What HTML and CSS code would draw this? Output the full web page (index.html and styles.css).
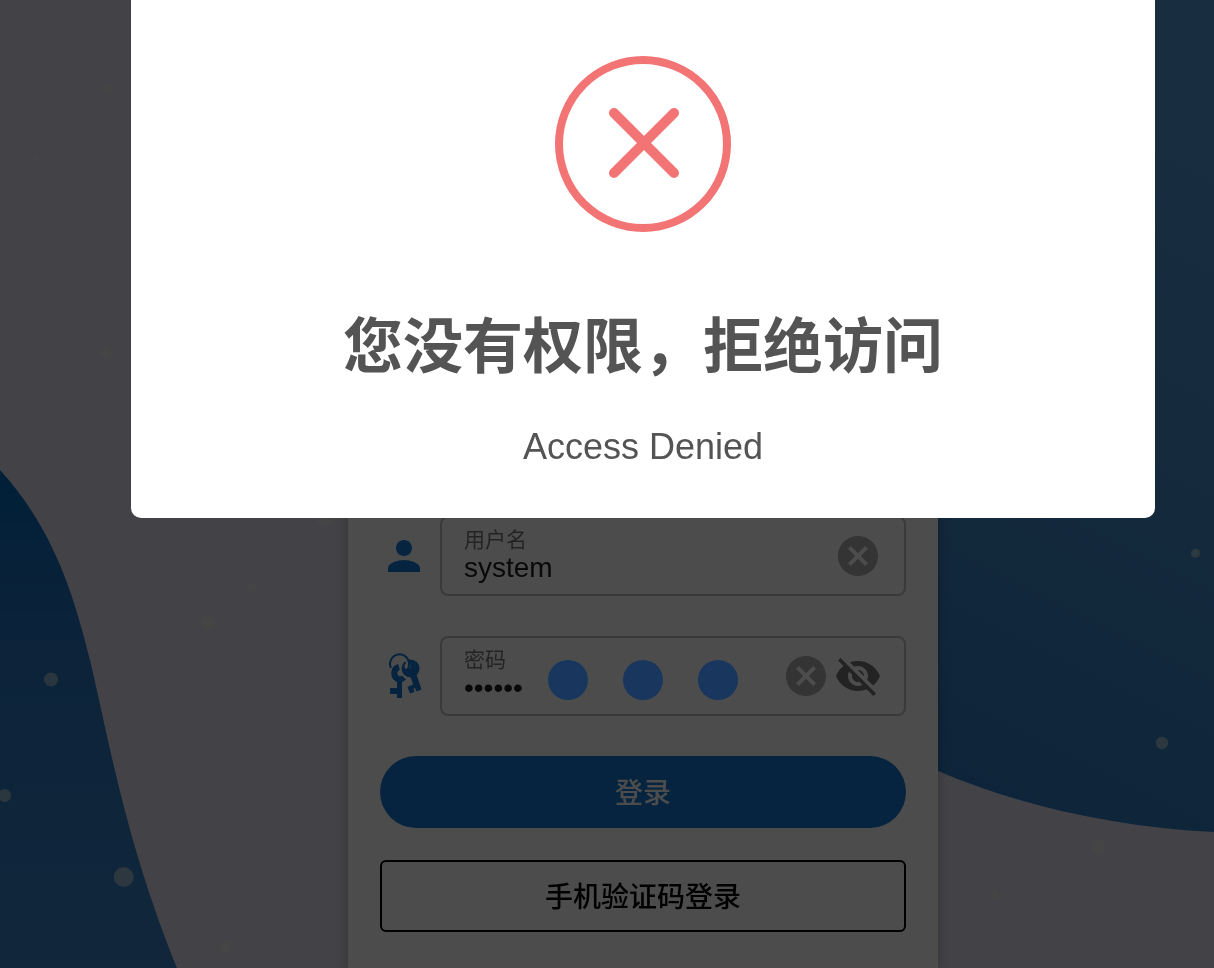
FILE: index.html
```html
<!DOCTYPE html>
<html lang="zh-CN">
<head>
<meta charset="utf-8">
<meta name="viewport" content="width=device-width, initial-scale=1">
<title>登录</title>
<link rel="stylesheet" href="styles.css">
</head>
<body>
<svg class="scene" viewBox="0 0 1214 968" preserveAspectRatio="xMidYMid slice" aria-hidden="true">
  <defs>
    <linearGradient id="waveLeft" gradientUnits="userSpaceOnUse" x1="0" y1="470" x2="0" y2="968">
      <stop offset="0" stop-color="#0669bd"/>
      <stop offset=".35" stop-color="#2876c2"/>
      <stop offset="1" stop-color="#3b82c6"/>
    </linearGradient>
    <linearGradient id="waveRight" gradientUnits="userSpaceOnUse" x1="850" y1="900" x2="1250" y2="100">
      <stop offset="0" stop-color="#2473c0"/>
      <stop offset=".5" stop-color="#4289c8"/>
      <stop offset="1" stop-color="#5598da"/>
    </linearGradient>
  </defs>
  <path fill="url(#waveLeft)" d="M0 470C55 530 75 600 90 660C110 745 126 842 177 968H0Z"/>
  <path fill="url(#waveRight)" d="M760 0V660C820 715 870 744 938 771C1020 806 1115 827 1214 832V0Z"/>
  <g class="bubbles">
    <circle cx="108" cy="89" r="4"/><circle cx="36" cy="158" r="2"/><circle cx="106" cy="353" r="5"/>
    <circle cx="325" cy="517" r="9"/><circle cx="252" cy="587" r="4.500"/><circle cx="208" cy="623.500" r="7"/>
    <circle cx="51" cy="679.500" r="7"/><circle cx="4.700" cy="795.500" r="6.500"/><circle cx="123.700" cy="877" r="10"/>
    <circle cx="200" cy="923.500" r="2"/><circle cx="226" cy="947" r="5.500"/><circle cx="1195.500" cy="553.300" r="4.500"/>
    <circle cx="1162" cy="743" r="6.200"/><circle cx="1097.700" cy="846.500" r="7"/><circle cx="994.500" cy="894.500" r="4"/>
  </g>
</svg>

<main class="page">
  <form class="card">
    <div class="row">
      <svg class="icon primary" viewBox="0 0 24 24" aria-hidden="true"><path d="M12 12c2.210 0 4-1.790 4-4s-1.790-4-4-4-4 1.790-4 4 1.790 4 4 4zm0 2c-2.670 0-8 1.340-8 4v2h16v-2c0-2.660-5.330-4-8-4z"/></svg>
      <div class="field">
        <div class="entry">
          <label for="user">用户名</label>
          <input id="user" type="text" value="system">
        </div>
        <button class="tool clear" type="button" aria-label="清除用户名"><svg class="icon" viewBox="0 0 24 24"><path d="M12 2C6.470 2 2 6.470 2 12s4.470 10 10 10 10-4.470 10-10S17.530 2 12 2zm5 13.590L15.590 17 12 13.410 8.410 17 7 15.590 10.590 12 7 8.410 8.410 7 12 10.590 15.590 7 17 8.410 13.410 12 17 15.590z"/></svg></button>
      </div>
    </div>
    <div class="row">
      <svg class="icon primary" viewBox="0 0 48 48" aria-hidden="true">
        <path class="head" d="M19 15A6.500 6.500 0 0 0 19 27.500Q22 27.500 24 25.500"/>
        <path d="M17 26H22V46H17V42H10V36H17Z"/>
        <path d="M31 24L36 21L41.500 37.500L36.500 39.500L35 36L33.500 36.500L34.500 40L30 41.500L27.500 35L33 32.500Z"/>
        <circle class="gap" cx="30.500" cy="16.500" r="10"/>
        <path d="M30 23L36 21L38 28L32.500 30Z"/>
        <circle cx="30.500" cy="16.500" r="9"/>
        <circle class="gap" cx="27.500" cy="14" r="3"/>
        <path class="slit" d="M24.500 7Q30 12 26.500 17"/>
        <path class="ring" d="M11 16A9.500 9.500 0 1 1 29 13Q29 17 26 18.500"/>
      </svg>
      <div class="field">
        <div class="entry">
          <label for="pass">密码</label>
          <input id="pass" type="password" value="system">
        </div>
        <button class="tool clear" type="button" aria-label="清除密码"><svg class="icon" viewBox="0 0 24 24"><path d="M12 2C6.470 2 2 6.470 2 12s4.470 10 10 10 10-4.470 10-10S17.530 2 12 2zm5 13.590L15.590 17 12 13.410 8.410 17 7 15.590 10.590 12 7 8.410 8.410 7 12 10.590 15.590 7 17 8.410 13.410 12 17 15.590z"/></svg></button>
        <button class="tool" type="button" aria-label="显示密码"><svg class="icon" viewBox="0 0 24 24"><path d="M12 7c2.760 0 5 2.240 5 5 0 .65-.13 1.260-.36 1.830l2.920 2.920c1.510-1.260 2.700-2.890 3.430-4.750-1.730-4.390-6-7.500-11-7.500-1.400 0-2.740.25-3.980.7l2.160 2.160C10.740 7.130 11.350 7 12 7zM2 4.270l2.280 2.280.46.46C3.080 8.300 1.780 10.020 1 12c1.730 4.390 6 7.500 11 7.500 1.550 0 3.030-.3 4.380-.84l.42.42L19.730 22 21 20.730 3.270 3 2 4.270zM7.530 9.800l1.550 1.550c-.05.21-.08.43-.08.65 0 1.660 1.340 3 3 3 .22 0 .44-.03.65-.08l1.550 1.550c-.67.33-1.410.53-2.200.53-2.760 0-5-2.240-5-5 0-.79.2-1.530.53-2.200zm4.310-.78l3.150 3.150.02-.16c0-1.660-1.340-3-3-3l-.17.01z"/></svg></button>
      </div>
    </div>
    <div class="actions">
      <button class="btn solid" type="submit">登录</button>
      <button class="btn outline" type="button">手机验证码登录</button>
    </div>
  </form>
</main>

<div class="backdrop">
  <section class="dialog" role="alertdialog" aria-modal="true" aria-labelledby="dlg-title" aria-describedby="dlg-text">
    <svg class="error" viewBox="0 0 176 176" aria-hidden="true">
      <circle cx="88" cy="88" r="84"/>
      <path class="cross" d="M59 57L119 117M119 57L59 117"/>
    </svg>
    <h1 id="dlg-title">您没有权限，拒绝访问</h1>
    <p id="dlg-text">Access Denied</p>
  </section>
  <div class="loader" role="status" aria-label="加载中"><span></span><span></span><span></span></div>
</div>
</body>
</html>
```
FILE: styles.css
```css
* { box-sizing: border-box; }

body {
  margin: 0;
  background: #dfdfee;
  color: #212121;
  font-family: "Liberation Sans", "Noto Sans CJK SC", sans-serif;
  font-size: 28px;
}

button, input { font: inherit; color: inherit; }

.scene {
  position: fixed;
  inset: 0;
  width: 100%;
  height: 100%;
}

.bubbles { fill: #f2f2e4; fill-opacity: .5; }

.page {
  position: relative;
  display: flex;
  justify-content: center;
  min-height: 100vh;
  padding-left: 72px;
}

.card {
  display: flex;
  flex-direction: column;
  gap: 40px;
  width: 100%;
  max-width: 590px;
  padding: 516px 32px 36px;
  background: #fff;
  box-shadow: 0 2px 12px rgba(0, 0, 0, .25);
}

.row { display: flex; align-items: center; gap: 12px; }

.icon { display: block; flex: none; width: 48px; height: 48px; fill: currentColor; }
.primary { color: #1476d2; }

.head { fill: none; stroke: currentColor; stroke-width: 6; }
.ring { fill: none; stroke: currentColor; stroke-width: 2; }
.gap { fill: #fff; }
.slit { fill: none; stroke: #fff; stroke-width: 2; }

.field {
  display: flex;
  flex: 1;
  align-items: center;
  gap: 4px;
  min-width: 0;
  height: 80px;
  padding: 0 22px;
  border: 2px solid #c2c2c2;
  border-radius: 8px;
}

.entry { display: flex; flex: 1; flex-direction: column; min-width: 0; }

.entry label { color: #777; font-size: 21px; line-height: 24px; }

.entry input {
  width: 100%;
  height: 32px;
  padding: 0;
  border: 0;
  outline: 0;
  background: none;
}

.tool { padding: 0; border: 0; background: none; color: #757575; }
.clear { color: #adadad; }

.actions { display: flex; flex-direction: column; gap: 32px; }

.btn { height: 72px; padding: 0 16px 2px; font-weight: 500; }
.solid { border: 0; border-radius: 36px; background: #1476d2; color: #fff; }
.outline { border: 2px solid #000; border-radius: 6px; background: none; color: #000; }

.backdrop {
  position: fixed;
  inset: 0;
  display: flex;
  flex-direction: column;
  align-items: center;
  gap: 142px;
  padding-left: 72px;
  background: rgba(0, 0, 0, .7);
}

.dialog {
  display: flex;
  flex-direction: column;
  align-items: center;
  width: 100%;
  max-width: 1024px;
  padding: 56px 40px 48px;
  border-radius: 0 0 10px 10px;
  background: #fff;
  color: #545454;
}

.error {
  width: 176px;
  height: 176px;
  fill: none;
  stroke: #f27474;
  stroke-width: 8;
  stroke-linecap: round;
}

.cross { stroke-width: 10; }

.dialog h1 {
  margin: 76px 0 36px;
  font-size: 60px;
  font-weight: 700;
  line-height: 80px;
}

.dialog p { margin: 0; font-size: 36px; line-height: 46px; }

.loader { display: flex; gap: 35px; }
.loader span { width: 40px; height: 40px; border-radius: 50%; background: #19365f; }
```
